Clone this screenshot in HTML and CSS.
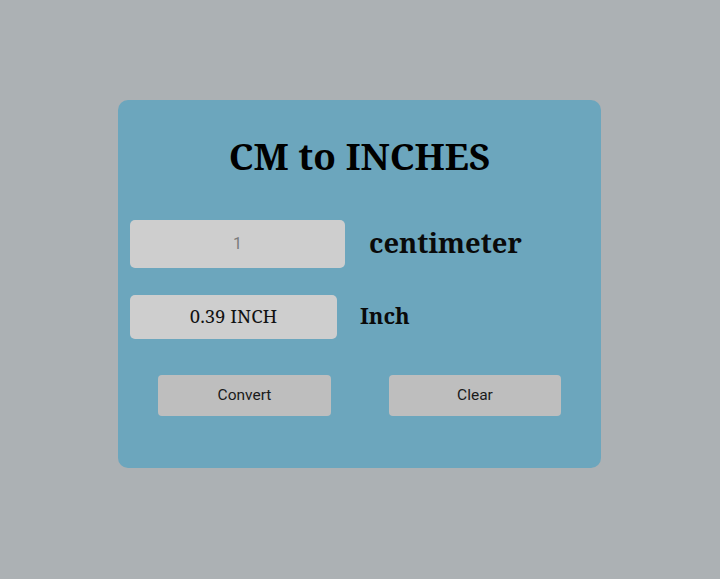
FILE: index.html
```html
<!DOCTYPE html>
<html>
<head>
<meta charset="utf-8">
<link rel="stylesheet" href="styles.css">
</head>
<body>
<div class="card">
  <h1 class="title">CM to INCHES</h1>
  <div class="row row-cm">
    <input class="field field-cm" type="text" placeholder="1">
    <span class="label label-cm">centimeter</span>
  </div>
  <div class="row row-in">
    <input class="field field-in" type="text" value="0.39 INCH">
    <span class="label label-in">Inch</span>
  </div>
  <div class="actions">
    <button class="btn">Convert</button>
    <button class="btn">Clear</button>
  </div>
</div>
</body>
</html>
```
FILE: styles.css
```css
html, body {
  margin: 0;
  padding: 0;
}
body {
  background: #acb1b4;
  width: 720px;
  height: 579px;
  padding-top: 100px;
  box-sizing: border-box;
  font-family: "Noto Serif", "DejaVu Serif", serif;
}
.card {
  width: 483px;
  height: 368px;
  margin-left: 118px;
  background: #6ca6bd;
  border-radius: 10px;
  box-sizing: border-box;
  padding: 32px 12px 0 12px;
}
.title {
  margin: 0;
  text-align: center;
  font-size: 37px;
  line-height: 48px;
  font-weight: bold;
  color: #000;
}
.row {
  display: flex;
  align-items: center;
}
.row-cm {
  margin-top: 40px;
  gap: 24px;
}
.row-in {
  margin-top: 27px;
  gap: 23px;
}
.field {
  border: none;
  outline: none;
  background: #cecece;
  border-radius: 5px;
  text-align: center;
  box-sizing: border-box;
  padding: 0;
  margin: 0;
}
.field-cm {
  width: 215px;
  height: 48px;
  font-family: Roboto, sans-serif;
  font-size: 16px;
  padding-bottom: 1px;
}
.field-cm::placeholder {
  color: #7a7a7a;
}
.field-in {
  width: 207px;
  height: 44px;
  font-family: "Noto Serif", "DejaVu Serif", serif;
  font-size: 18.5px;
  color: #111;
  padding-bottom: 3px;
}
.label {
  font-weight: bold;
  color: #0a0a0a;
}
.label-cm {
  font-size: 27.4px;
  margin-bottom: 4px;
}
.label-in {
  font-size: 22px;
  margin-bottom: 4px;
}
.actions {
  display: flex;
  gap: 58px;
  margin-top: 36px;
  padding-left: 28px;
}
.btn {
  border: none;
  background: #bebebe;
  border-radius: 4px;
  height: 41px;
  width: 173px;
  font-family: Roboto, sans-serif;
  font-size: 15.5px;
  color: #1a1a1a;
  padding: 0 0 2px 0;
}
.btn + .btn {
  width: 172px;
}
```
